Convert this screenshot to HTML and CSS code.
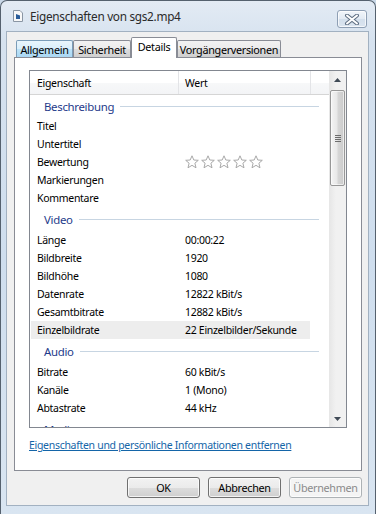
FILE: index.html
```html
<!DOCTYPE html>
<html lang="de">
<head>
<meta charset="utf-8">
<title>Eigenschaften von sgs2.mp4</title>
<link rel="stylesheet" href="styles.css">
</head>
<body>
<div class="window">
  <div class="titlebar">
    <svg class="appicon" width="10" height="12" viewBox="0 0 10 12">
      <path d="M0.5 0.5 H7 L9.5 3 V11.5 H0.5 Z" fill="#f8f8f8" stroke="#8a96a4"/>
      <path d="M3 4 L7 5.5 L7 9 L3 9 Z" fill="#2a5d9a"/>
    </svg>
    <span class="title">Eigenschaften von sgs2.mp4</span>
    <div class="close">
      <svg width="16" height="11" viewBox="0 0 16 11">
        <path d="M3 1.5 L13 9.5 M13 1.5 L3 9.5" stroke="#5f6f83" stroke-width="4" stroke-linecap="round"/>
        <path d="M3 1.5 L13 9.5 M13 1.5 L3 9.5" stroke="#ffffff" stroke-width="2" stroke-linecap="round"/>
      </svg>
    </div>
  </div>
  <div class="client">
    <div class="tabs">
      <div class="tab hover w1">Allgemein</div>
      <div class="tab w2">Sicherheit</div>
      <div class="tab active w3">Details</div>
      <div class="tab w4">Vorgängerversionen</div>
    </div>
    <div class="panel">
      <div class="listview">
        <div class="lv-main">
          <div class="lv-header">
            <div class="hcol c1">Eigenschaft</div>
            <div class="hcol c2">Wert</div>
            <div class="hcol c3"></div>
          </div>
          <div class="lv-body">
            <div class="group"><span>Beschreibung</span><i class="gline"></i></div>
            <div class="row"><span class="k">Titel</span><span class="v"></span></div>
            <div class="row"><span class="k">Untertitel</span><span class="v"></span></div>
            <div class="row"><span class="k">Bewertung</span><span class="v stars">
              <svg width="82" height="14" viewBox="0 0 82 14">
                <g fill="#ffffff" stroke="#a9a9a9" stroke-width="1" stroke-linejoin="round">
                  <path d="M7 0.8 L8.8 5 L13.3 5.3 L9.9 8.2 L11 12.8 L7 10.3 L3 12.8 L4.1 8.2 L0.7 5.3 L5.2 5 Z"/>
                  <path d="M23 0.8 L24.8 5 L29.3 5.3 L25.9 8.2 L27 12.8 L23 10.3 L19 12.8 L20.1 8.2 L16.7 5.3 L21.2 5 Z"/>
                  <path d="M39 0.8 L40.8 5 L45.3 5.3 L41.9 8.2 L43 12.8 L39 10.3 L35 12.8 L36.1 8.2 L32.7 5.3 L37.2 5 Z"/>
                  <path d="M55 0.8 L56.8 5 L61.3 5.3 L57.9 8.2 L59 12.8 L55 10.3 L51 12.8 L52.1 8.2 L48.7 5.3 L53.2 5 Z"/>
                  <path d="M71 0.8 L72.8 5 L77.3 5.3 L73.9 8.2 L75 12.8 L71 10.3 L67 12.8 L68.1 8.2 L64.7 5.3 L69.2 5 Z"/>
                </g>
              </svg></span></div>
            <div class="row"><span class="k">Markierungen</span><span class="v"></span></div>
            <div class="row"><span class="k">Kommentare</span><span class="v"></span></div>
            <div class="group gap"><span>Video</span><i class="gline"></i></div>
            <div class="row"><span class="k">Länge</span><span class="v">00:00:22</span></div>
            <div class="row"><span class="k">Bildbreite</span><span class="v">1920</span></div>
            <div class="row"><span class="k">Bildhöhe</span><span class="v">1080</span></div>
            <div class="row"><span class="k">Datenrate</span><span class="v">12822 kBit/s</span></div>
            <div class="row"><span class="k">Gesamtbitrate</span><span class="v">12882 kBit/s</span></div>
            <div class="row sel"><span class="k">Einzelbildrate</span><span class="v">22 Einzelbilder/Sekunde</span></div>
            <div class="group gap"><span>Audio</span><i class="gline"></i></div>
            <div class="row"><span class="k">Bitrate</span><span class="v">60 kBit/s</span></div>
            <div class="row"><span class="k">Kanäle</span><span class="v">1 (Mono)</span></div>
            <div class="row"><span class="k">Abtastrate</span><span class="v">44 kHz</span></div>
            <div class="group gap"><span>Medien</span><i class="gline"></i></div>
          </div>
        </div>
        <div class="scrollbar">
          <div class="sb-btn">
            <svg width="7" height="4" viewBox="0 0 7 4"><path d="M0 4 L3.5 0 L7 4 Z" fill="#404a56"/></svg>
          </div>
          <div class="sb-track">
            <div class="sb-thumb">
              <div class="grip"><i></i><i></i><i></i><i></i></div>
            </div>
          </div>
          <div class="sb-btn">
            <svg width="7" height="4" viewBox="0 0 7 4"><path d="M0 0 L3.5 4 L7 0 Z" fill="#404a56"/></svg>
          </div>
        </div>
      </div>
      <a class="link" href="#">Eigenschaften und persönliche Informationen entfernen</a>
    </div>
    <div class="buttons">
      <button class="btn">OK</button>
      <button class="btn">Abbrechen</button>
      <button class="btn disabled">Übernehmen</button>
    </div>
  </div>
</div>
</body>
</html>
```
FILE: styles.css
```css
* { box-sizing: border-box; }
html, body { margin: 0; padding: 0; }
body {
  width: 376px;
  height: 514px;
  overflow: hidden;
  background: #c9d8e8;
  font-family: "Noto Sans", "Open Sans", sans-serif;
  font-size: 10.5px;
  letter-spacing: -0.3px;
  color: #000;
}
.window {
  width: 376px;
  height: 514px;
  display: flex;
  flex-direction: column;
  border: 1px solid #55616e;
  border-bottom: none;
  border-radius: 7px 7px 0 0;
  background: linear-gradient(to bottom, #e3ebf4 0px, #d6e2ef 40px, #cfdeee 260px, #d9e5f1 514px);
}
.titlebar {
  height: 30px;
  display: flex;
  align-items: center;
  padding-left: 12px;
  flex: none;
}
.appicon { flex: none; margin-right: 7px; }
.title {
  font-size: 11.8px;
  letter-spacing: -0.3px;
  color: #2a2a2a;
}
.close {
  margin-left: auto;
  margin-right: 8px;
  align-self: flex-start;
  margin-top: 9px;
  width: 30px;
  height: 18px;
  border: 1px solid #8e9fb4;
  border-radius: 3px;
  background: linear-gradient(to bottom, #f1f5fa 0%, #e2eaf3 50%, #d3dfec 51%, #dbe5f0 100%);
  display: flex;
  align-items: center;
  justify-content: center;
  box-shadow: inset 0 0 0 1px rgba(255,255,255,0.7);
}
.client {
  flex: 1;
  margin: 0 6px 8px 5px;
  border: 1px solid #a2b1c1;
  background: #f0f0f0;
  padding: 5px 6px 0 7px;
  display: flex;
  flex-direction: column;
}
.tabs {
  display: flex;
  align-items: flex-end;
  height: 21px;
  margin-bottom: -1px;
  padding-left: 2px;
  position: relative;
  z-index: 1;
}
.tab {
  height: 17px;
  margin-bottom: 1px;
  border: 1px solid #898c95;
  border-bottom: none;
  border-radius: 2px 2px 0 0;
  background: linear-gradient(to bottom, #f2f2f2 0%, #ebebeb 50%, #dddddd 51%, #cfcfcf 100%);
  display: flex;
  align-items: center;
  justify-content: center;
  font-size: 10.8px;
  color: #000;
  white-space: nowrap;
}
.tab.hover {
  border-color: #7a9cb8;
  background: linear-gradient(to bottom, #e9f5fc 0%, #d8eefb 50%, #bde3f8 51%, #a9d7f3 100%);
}
.tab.active {
  height: 21px;
  margin-bottom: 0;
  background: #ffffff;
  padding-bottom: 3px;
}
.w1 { width: 57px; }
.w2 { width: 58px; }
.w3 { width: 46px; }
.w4 { width: 104px; }
.panel {
  width: 348px;
  height: 414px;
  border: 1px solid #898c95;
  background: #ffffff;
  padding: 12px 0 0 14px;
  display: flex;
  flex-direction: column;
}
.listview {
  width: 318px;
  height: 358px;
  border: 1px solid #828790;
  display: flex;
  overflow: hidden;
  flex: none;
}
.lv-main {
  flex: 1;
  overflow: hidden;
  display: flex;
  flex-direction: column;
}
.lv-header {
  height: 24px;
  flex: none;
  display: flex;
  border-bottom: 1px solid #d5d5d5;
  background: linear-gradient(to bottom, #ffffff 0%, #ffffff 50%, #f7f8f9 51%, #f3f4f6 100%);
}
.hcol {
  height: 23px;
  display: flex;
  align-items: center;
  border-right: 1px solid #e3e4e7;
}
.c1 { width: 149px; padding-left: 7px; }
.c2 { width: 132px; padding-left: 6px; }
.c3 { flex: 1; border-right: none; }
.lv-body { flex: 1; overflow: hidden; }
.group {
  height: 22px;
  display: flex;
  align-items: center;
  padding-left: 14px;
  padding-right: 10px;
  color: #1e3a8a;
  font-size: 11.4px;
}
.group.gap { height: 24px; padding-top: 1px; }
.gline {
  flex: 1;
  height: 1px;
  margin-left: 6px;
  background: #c7d5e2;
}
.row {
  height: 18px;
  width: 279px;
  margin-left: 1px;
  display: flex;
  align-items: center;
}
.row.sel { background: #ededed; }
.k { width: 148px; padding-left: 6px; flex: none; white-space: nowrap; }
.v { flex: 1; padding-left: 6px; white-space: nowrap; }
.stars { display: flex; align-items: center; padding-left: 6px; }
.stars svg { display: block; }
.scrollbar {
  width: 17px;
  flex: none;
  display: flex;
  flex-direction: column;
  background: linear-gradient(to right, #e6e6e6 0%, #f1f1f1 40%, #f1f1f1 100%);
}
.sb-btn {
  height: 17px;
  flex: none;
  display: flex;
  align-items: center;
  justify-content: center;
}
.sb-track {
  flex: 1;
  padding: 2px 1px 0 1px;
}
.sb-thumb {
  height: 96px;
  border: 1px solid #979797;
  border-radius: 2px;
  background: linear-gradient(to right, #f4f4f4 0%, #e8e8e8 45%, #d6d6d6 55%, #cbcbcb 100%);
  box-shadow: inset 0 0 0 1px rgba(255,255,255,0.6);
  display: flex;
  align-items: center;
  justify-content: center;
}
.grip { display: flex; flex-direction: column; gap: 1px; }
.grip i { display: block; width: 6px; height: 1px; background: #6d6d6d; }
.link {
  margin-top: 10px;
  color: #1465a8;
  text-decoration: underline;
  line-height: 14px;
  align-self: flex-start;
}
.buttons {
  display: flex;
  justify-content: flex-end;
  gap: 8px;
  margin-top: 6px;
}
.btn {
  width: 73px;
  height: 21px;
  border: 1px solid #707070;
  border-radius: 3px;
  background: linear-gradient(to bottom, #f2f2f2 0%, #ebebeb 50%, #dddddd 51%, #cfcfcf 100%);
  box-shadow: inset 0 0 0 1px rgba(255,255,255,0.75);
  font-family: "Noto Sans", "Open Sans", sans-serif;
  font-size: 10.8px;
  letter-spacing: -0.3px;
  color: #000;
  padding: 0;
}
.btn.disabled {
  border-color: #adb2b5;
  background: #f4f4f4;
  color: #8b8b8b;
}
```
